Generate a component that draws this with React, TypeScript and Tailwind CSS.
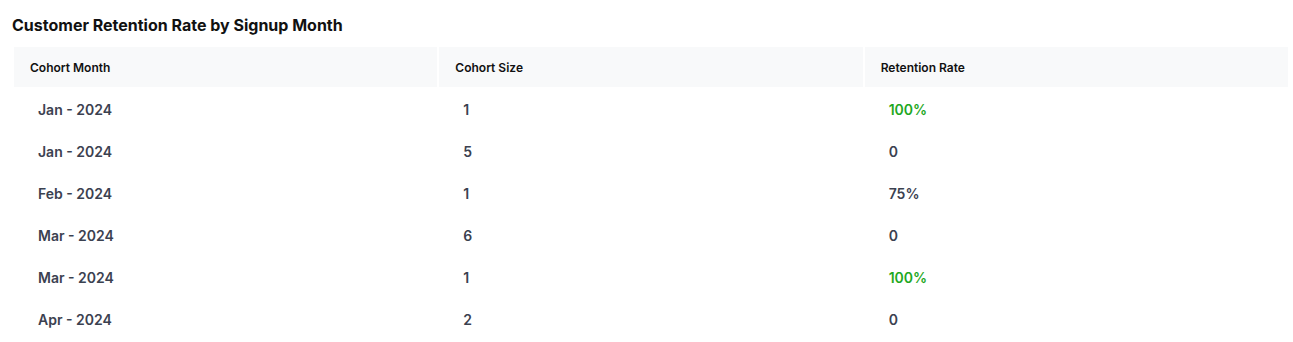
const rows = [
  { month: 'Jan - 2024', size: '1', rate: '100%' },
  { month: 'Jan - 2024', size: '5', rate: '0' },
  { month: 'Feb - 2024', size: '1', rate: '75%' },
  { month: 'Mar - 2024', size: '6', rate: '0' },
  { month: 'Mar - 2024', size: '1', rate: '100%' },
  { month: 'Apr - 2024', size: '2', rate: '0' },
];

export default function App() {
  return (
    <div className="bg-white pl-3 pt-[13px] w-[1293px] h-[342px] font-['Inter',sans-serif]">
      <h2 className="text-base font-bold text-[#111] leading-6">Customer Retention Rate by Signup Month</h2>
      <table className="mt-2 w-[1278px] border-separate border-spacing-[2px] table-fixed">
        <thead>
          <tr>
            <th className="bg-[#f8f9fa] h-10 pl-4 pt-px text-left text-xs font-semibold text-[#111]">Cohort Month</th>
            <th className="bg-[#f8f9fa] h-10 pl-4 pt-px text-left text-xs font-semibold text-[#111]">Cohort Size</th>
            <th className="bg-[#f8f9fa] h-10 pl-4 pt-px text-left text-xs font-semibold text-[#111]">Retention Rate</th>
          </tr>
        </thead>
        <tbody>
          {rows.map((r, i) => (
            <tr key={i}>
              <td className="h-10 pl-6 pt-0.5 text-sm font-semibold text-[#3b4150]">{r.month}</td>
              <td className="h-10 pl-6 pt-0.5 text-sm font-semibold text-[#3b4150]">{r.size}</td>
              <td
                className={
                  r.rate === '100%'
                    ? 'h-10 pl-6 pt-0.5 text-sm font-semibold text-[#1fa81f]'
                    : 'h-10 pl-6 pt-0.5 text-sm font-semibold text-[#3b4150]'
                }
              >
                {r.rate}
              </td>
            </tr>
          ))}
        </tbody>
      </table>
    </div>
  );
}
